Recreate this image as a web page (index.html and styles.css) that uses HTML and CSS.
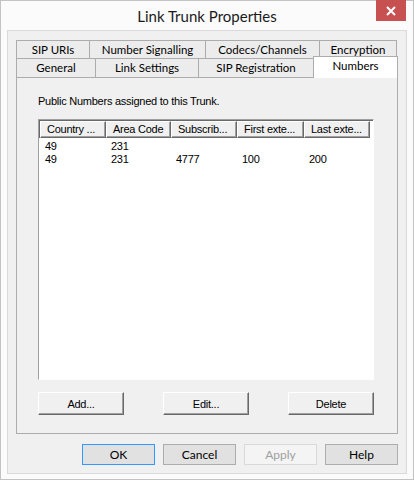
FILE: index.html
```html
<!DOCTYPE html>
<html lang="en">
<head>
  <meta charset="UTF-8">
  <title>Link Trunk Properties</title>
  <link rel="stylesheet" href="styles.css">
</head>
<body>
  <div class="window">
    <div class="title-bar">
      <div class="title">Link Trunk Properties</div>
      <button class="close-btn">
        <svg width="10" height="10" viewBox="0 0 10 10">
          <path d="M1 1 L9 9 M9 1 L1 9" stroke="#fff" stroke-width="2"/>
        </svg>
      </button>
    </div>

    <div class="client">
      <div class="tabs">
        <div class="tab-row">
          <div class="tab w-sipuris">SIP URIs</div>
          <div class="tab w-signalling">Number Signalling</div>
          <div class="tab w-codecs">Codecs/Channels</div>
          <div class="tab w-encryption">Encryption</div>
        </div>
        <div class="tab-row">
          <div class="tab w-general">General</div>
          <div class="tab w-link">Link Settings</div>
          <div class="tab w-sipreg">SIP Registration</div>
          <div class="tab tab-active w-numbers">Numbers</div>
        </div>
      </div>

      <div class="tab-page">
        <div class="label">Public Numbers assigned to this Trunk.</div>

        <div class="listview">
          <div class="lv-header">
            <div class="lv-col c1">Country ...</div>
            <div class="lv-col c2">Area Code</div>
            <div class="lv-col c3">Subscrib...</div>
            <div class="lv-col c4">First exte...</div>
            <div class="lv-col c5">Last exte...</div>
          </div>
          <div class="lv-body">
            <div class="lv-row">
              <div class="lv-cell c1">49</div>
              <div class="lv-cell c2">231</div>
              <div class="lv-cell c3"></div>
              <div class="lv-cell c4"></div>
              <div class="lv-cell c5"></div>
            </div>
            <div class="lv-row">
              <div class="lv-cell c1">49</div>
              <div class="lv-cell c2">231</div>
              <div class="lv-cell c3">4777</div>
              <div class="lv-cell c4">100</div>
              <div class="lv-cell c5">200</div>
            </div>
          </div>
        </div>

        <div class="list-buttons">
          <button class="btn3d">Add...</button>
          <button class="btn3d">Edit...</button>
          <button class="btn3d">Delete</button>
        </div>
      </div>

      <div class="dialog-buttons">
        <button class="btn btn-default">OK</button>
        <button class="btn">Cancel</button>
        <button class="btn" disabled>Apply</button>
        <button class="btn">Help</button>
      </div>
    </div>
  </div>
</body>
</html>
```

FILE: styles.css
```css
* {
  box-sizing: border-box;
}

body {
  margin: 0;
  padding: 0;
  background-color: #fff;
  font-family: Lato, "Noto Sans", sans-serif;
}

.window {
  width: 414px;
  height: 480px;
  border: 1px solid #c3c3c3;
  background-color: #fbfbfb;
  display: flex;
  flex-direction: column;
}

/* title bar */
.title-bar {
  height: 29px;
  display: flex;
  align-items: flex-start;
  position: relative;
}

.title {
  flex: 1;
  text-align: center;
  font-size: 15px;
  line-height: 30px;
  color: #1a1a1a;
}

.close-btn {
  position: absolute;
  top: -1px;
  right: 7px;
  width: 30px;
  height: 21px;
  border: none;
  padding: 0;
  background-color: #c75050;
  display: flex;
  justify-content: center;
  align-items: center;
}

/* dialog client area */
.client {
  flex: 1;
  margin: 0 6px 7px 6px;
  border: 1px solid #dadada;
  background-color: #f0f0f0;
  padding: 9px 8px 8px 8px;
  display: flex;
  flex-direction: column;
}

/* tabs */
.tabs {
  display: flex;
  flex-direction: column;
}

.tab-row {
  display: flex;
  height: 18px;
}

.tab-row + .tab-row {
  height: 19px;
}

.tab {
  border: 1px solid #acacac;
  border-bottom: none;
  background-color: #ececec;
  font-size: 11.5px;
  color: #000;
  display: flex;
  justify-content: center;
  align-items: center;
  padding-bottom: 1px;
}

.tab + .tab {
  margin-left: -1px;
}

.tab-active {
  background-color: #fff;
  margin-top: -2px;
  height: 22px;
  padding-bottom: 4px;
  position: relative;
  z-index: 1;
}

.w-sipuris { width: 74px; }
.w-signalling { width: 117px; }
.w-codecs { width: 115px; }
.w-encryption { width: 78px; }
.w-general { width: 80px; }
.w-link { width: 104px; }
.w-sipreg { width: 116px; }
.w-numbers { width: 85px; }

.tab-page {
  height: 357px;
  border: 1px solid #acacac;
  background-color: #f0f0f0;
  padding: 17px 0 0 21px;
  font-family: "Liberation Sans", Arial, sans-serif;
  font-size: 11px;
  letter-spacing: -0.25px;
}

.label {
  height: 13px;
  line-height: 13px;
  color: #000;
}

/* list view */
.listview {
  margin-top: 11px;
  width: 336px;
  height: 261px;
  border: 1px solid;
  border-color: #a0a0a0 #fff #fff #a0a0a0;
  background-color: #fff;
}

.lv-header {
  display: flex;
  border-top: 1px solid #696969;
  border-left: 1px solid #696969;
  height: 18px;
}

.lv-col {
  height: 17px;
  background-color: #f0f0f0;
  border: 1px solid;
  border-color: #fff #696969 #696969 #fff;
  box-shadow: inset -1px -1px 0 #a0a0a0;
  padding-left: 6px;
  line-height: 14px;
  white-space: nowrap;
  overflow: hidden;
}

.lv-body {
  padding-top: 2px;
  padding-left: 1px;
}

.lv-row {
  display: flex;
  height: 13px;
  line-height: 13px;
}

.lv-cell {
  padding-left: 5px;
}

.c1 { width: 66px; }
.c2 { width: 65px; }
.c3 { width: 66px; }
.c4 { width: 67px; }
.c5 { width: 66px; }

.list-buttons {
  display: flex;
  width: 336px;
  justify-content: space-between;
  margin-top: 12px;
}

.btn3d {
  width: 86px;
  height: 23px;
  background-color: #f0f0f0;
  border: 1px solid;
  border-color: #fff #696969 #696969 #fff;
  box-shadow: inset -1px -1px 0 #a0a0a0;
  font-family: "Liberation Sans", Arial, sans-serif;
  font-size: 11px;
  letter-spacing: -0.25px;
  color: #000;
  padding: 0;
}

/* OK / Cancel / Apply / Help */
.dialog-buttons {
  display: flex;
  justify-content: flex-end;
  gap: 8px;
  margin-top: 10px;
}

.btn {
  width: 73px;
  height: 21px;
  border: 1px solid #adadad;
  background-color: #e1e1e1;
  font-family: Lato, "Noto Sans", sans-serif;
  font-size: 12px;
  color: #000;
  padding: 0;
}

.btn-default {
  border-color: #3399ff;
}

.btn:disabled {
  background-color: #f4f4f4;
  border-color: #d9d9d9;
  color: #a0a0a0;
}
```
